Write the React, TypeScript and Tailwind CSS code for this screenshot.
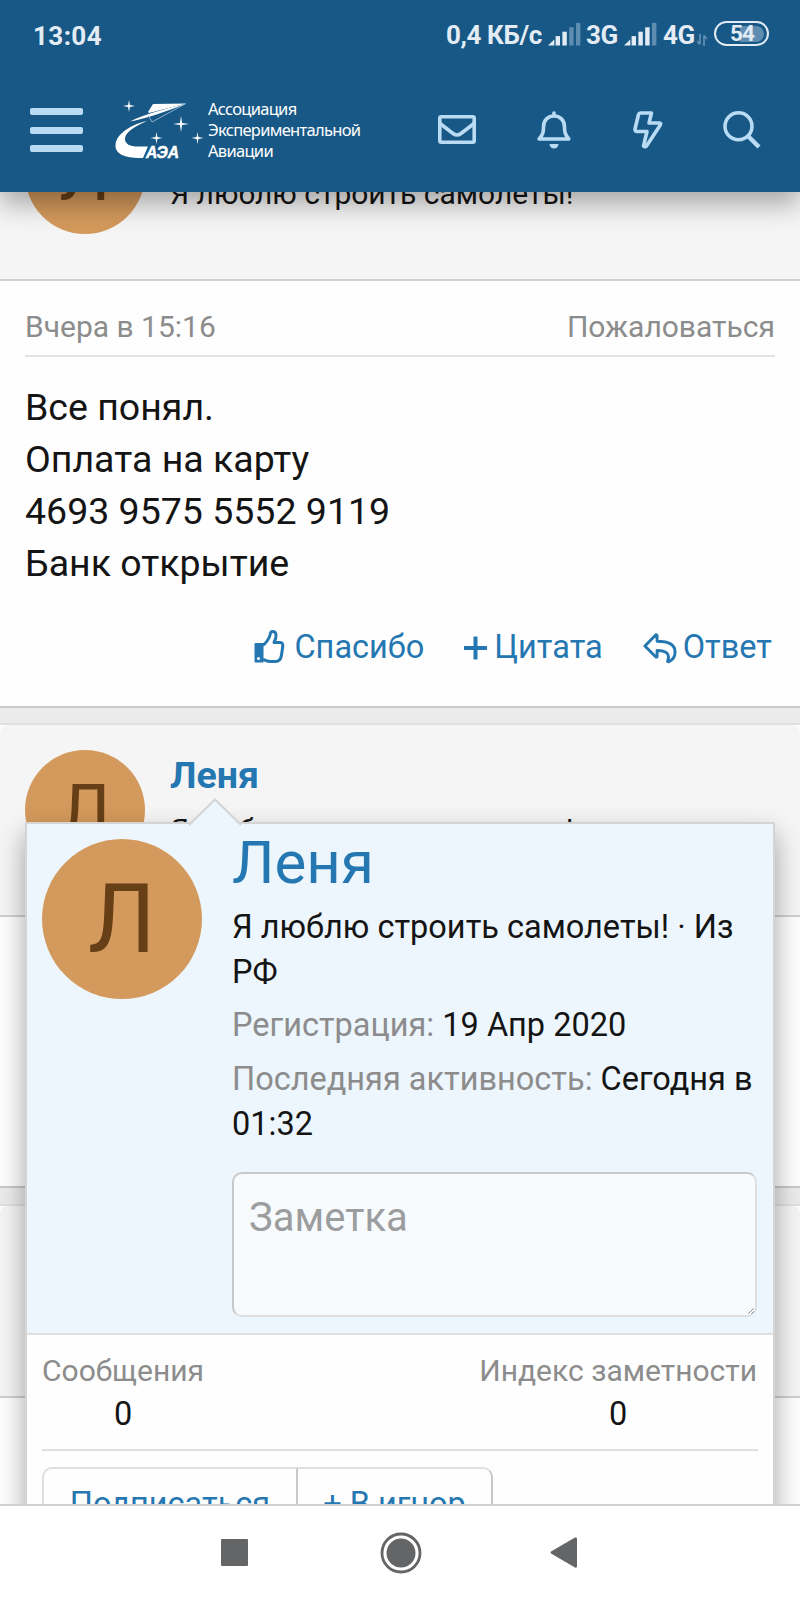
import * as React from 'react';

interface AvatarProps {
    big?: boolean;
}

const Avatar = ({ big }: AvatarProps) => (
    <div
        className={
            'flex shrink-0 items-center justify-center rounded-full bg-[#d4995c] text-[#663f16] ' +
            (big ? 'h-[160px] w-[160px] text-[96px] leading-[96px]' : 'h-[120px] w-[120px] pt-[3px] text-[72px] leading-[72px]')
        }
    >
        Л
    </div>
);

const Signal = ({ level }: { level: number }) => (
    <svg width="34" height="24" viewBox="0 0 34 24">
        {[0, 1, 2, 3, 4].map(i => (
            i === 0
                ? <path key={i} d="M0 23.5L6.3 17.5V23.5Z" fill="#e3ecf4" />
                : <rect
                    key={i}
                    x={i * 6.8 + 0.8}
                    y={18.5 - i * 4.4}
                    width="4.4"
                    height={5 + i * 4.4}
                    fill={i < level ? '#e3ecf4' : '#5f8db1'}
                />
        ))}
    </svg>
);

const StatusBar = () => (
    <div className="flex h-[72px] items-start justify-between pl-[33px] pr-[31px] text-[26px] font-bold leading-[30px] text-[#e3ecf4]">
        <div className="pt-[21px] tracking-[0.4px]">13:04</div>
        <div className="flex pt-[20px]">
            <div className="w-[102px] tracking-[-0.4px]">0,4 КБ/с</div>
            <div className="w-[38px] pt-[2px]"><Signal level={3} /></div>
            <div className="w-[38px] tracking-[-0.5px]">3G</div>
            <div className="w-[39px] pt-[2px]"><Signal level={4} /></div>
            <div className="w-[34px] tracking-[-0.5px]">4G</div>
            <svg className="mr-[7px] mt-[14px]" width="10" height="12" viewBox="0 0 10 12" fill="none" stroke="#5f8db1" strokeWidth="1.8">
                <path d="M3 0V10M0 7L3 10.5M7 12V1.5M10 5L7 1.5" />
            </svg>
            <div className="mt-px flex h-[25px] w-[55px] items-center justify-end rounded-full border-2 border-[#e3ecf4] pr-[3px]">
                <div className="flex h-[16px] w-[24px] items-center rounded-r-full bg-[#5f8db1]">
                    <span className="-ml-[10px] text-[22.5px] leading-none tracking-[-1px]">54</span>
                </div>
            </div>
        </div>
    </div>
);

const Logo = () => (
    <svg width="90" height="62" viewBox="0 0 90 62" fill="#fff">
        <path d="M32 21C14 25 1 35 0.5 45C0 54 10 58 25 58H28L33 46.500H23C15 46.500 10 44 10 39C10 33 18 27 32 21Z" />
        <path d="M38 4L71 3.500L34 13L33 12Z" />
        <path d="M71 3.500C50 9 30 14 15 21.500C28 19 48 13 71 3.500Z" />
        <path d="M33 15L37 22L71 3.500" fill="none" stroke="#a9c5da" strokeWidth="0.8" />
        <path d="M14 0L14.900 5.100L20 6L14.900 6.900L14 12L13.100 6.900L8 6L13.100 5.100Z" />
        <path d="M66 16L67.100 22.900L74 24L67.100 25.100L66 32L64.900 25.100L58 24L64.900 22.900Z" />
        <path d="M41.500 32L42.400 37.100L47.500 38L42.400 38.900L41.500 44L40.600 38.900L35.500 38L40.600 37.100Z" />
        <path d="M82.500 32L83.400 37.100L88.500 38L83.400 38.900L82.500 44L81.600 38.900L76.500 38L81.600 37.100Z" />
        <text x="31" y="58" fontFamily="Liberation Sans" fontSize="16.500" fontWeight="bold" fontStyle="italic" stroke="#fff" strokeWidth="0.5" textLength="33" lengthAdjust="spacingAndGlyphs">АЭА</text>
    </svg>
);

const NavBar = () => (
    <div className="flex h-[120px] pl-[30px] pr-[39px]">
        <div className="flex w-[53px] flex-col gap-[11.5px] pt-[36px]">
            <div className="h-[7px] rounded-[2px] bg-[#b9dbf4]" />
            <div className="h-[7px] rounded-[2px] bg-[#b9dbf4]" />
            <div className="h-[7px] rounded-[2px] bg-[#b9dbf4]" />
        </div>
        <div className="ml-[32px] mt-[28px]"><Logo /></div>
        <div className="ml-[3px] mt-[26px] w-[230px] font-['Noto_Sans'] text-[16.5px] leading-[21px] tracking-[-0.7px] text-white">
            Ассоциация<br />Экспериментальной<br />Авиации
        </div>
        <div className="mt-[38px] flex flex-1 items-start justify-between">
            <svg width="38" height="40" viewBox="0 0 38 40" fill="none" stroke="#b9dbf4" strokeWidth="3.600" strokeLinejoin="round">
                <rect x="1.800" y="6.800" width="34.400" height="25.400" rx="1.500" />
                <path d="M2 13.500L15 23.500Q19 26.500 23 23.500L36 13.500" />
            </svg>
            <svg className="-ml-[1px]" width="34" height="40" viewBox="0 0 34 40" fill="none" stroke="#b9dbf4" strokeWidth="3.600" strokeLinejoin="round" strokeLinecap="round">
                <path d="M17 3V6M2.200 29H31.800C28 24.500 27.500 22 27.500 17C27.500 10 23 6 17 6C11 6 6.500 10 6.500 17C6.500 22 6 24.500 2.200 29Z" />
                <path d="M12.500 34H21.500C21 40 13 40 12.500 34Z" fill="#b9dbf4" stroke="none" />
            </svg>
            <svg className="-mr-[2px]" width="30" height="40" viewBox="0 0 30 40" fill="none" stroke="#b9dbf4" strokeWidth="3.600" strokeLinejoin="round">
                <path d="M7.500 3H18.500L16 13H26.500Q28.300 13 27.300 15L13.500 36Q12 37.500 10.500 36L14 21.500H4Q1.800 21.500 2 19L5.500 4.500Q6 3 7.500 3Z" />
            </svg>
            <svg width="38" height="40" viewBox="0 0 38 40" fill="none" stroke="#b9dbf4" strokeWidth="3.600">
                <circle cx="15.500" cy="16.300" r="13.500" />
                <path d="M25 26L36 37" strokeWidth="4.500" />
            </svg>
        </div>
    </div>
);

interface PostHeaderProps {
    name?: string;
    title?: string;
}

const PostHeader = ({ name, title }: PostHeaderProps) => (
    <div className="flex h-[192px] gap-[25px] rounded-t-[8px] border-b-2 border-[#d0d0d0] bg-[#f5f5f5] px-[25px] pt-[25px]">
        {title && <Avatar />}
        <div>
            <div className="-mt-px h-[52px] text-[37.5px] font-bold leading-[52px] text-[#2577b1]">{name}</div>
            <div className="mt-[8px] text-[30px] leading-[42px]">{title}</div>
        </div>
    </div>
);

const PostActions = () => (
    <div className="flex h-[46px] justify-end pr-[3px] text-[32.5px] leading-[46px] text-[#2577b1]">
        <div className="flex">
            <svg className="mr-[9px] mt-[5px]" width="31" height="35" viewBox="0 0 30 35" fill="none" stroke="#2577b1" strokeWidth="3" strokeLinejoin="round">
                <path d="M1 14H9V33.500H1Q0 33.500 0 32.500V15Q0 14 1 14Z" fill="#2577b1" stroke="none" />
                <circle cx="4" cy="29.500" r="1.500" fill="#fff" stroke="none" />
                <path d="M8.500 16C11 15 15 9 15.500 6C15.800 3.500 16.500 2.500 18 2.500C23 2.500 22 9 19.500 13.500H25.500Q28.500 13.500 28.300 17L27 26Q26 32.500 21 32.500H16C12 32.500 11 31 8.500 30.500" />
            </svg>
            Спасибо
        </div>
        <div className="ml-[40px] flex">
            <svg className="mr-[7px] mt-[12px]" width="23" height="24" viewBox="0 0 23 24" stroke="#2577b1" strokeWidth="4">
                <path d="M0 12H23M11.500 0.500V23.500" />
            </svg>
            Цитата
        </div>
        <div className="ml-[40px] flex">
            <svg className="mr-[6px] mt-[8px]" width="34" height="32" viewBox="0 0 35 32" fill="none" stroke="#2577b1" strokeWidth="3" strokeLinejoin="round">
                <path d="M2 14L13 2.500Q14.500 2 14.500 3.500V9C25 9 33 12 33 20C33 25 30 28.500 26.500 30.200Q25 30.500 25.500 29C28 22 24 18.500 14.500 18.500V24.500Q14.500 26 13 25Z" />
            </svg>
            Ответ
        </div>
    </div>
);

const MemberTooltip = () => (
    <div className="absolute left-[25px] top-[630px] h-[900px] w-[750px] border-2 border-[#d4d4d4] bg-[#fefefe] shadow-[0_12px_25px_rgba(0,0,0,0.35)]">
        <svg className="absolute -top-[26px] left-[161px]" width="54" height="28" viewBox="0 0 54 28">
            <path d="M1 27L27 1.500L53 27V28H1Z" fill="#edf6fd" />
            <path d="M1 27L27 1.500L53 27" fill="none" stroke="#d4d4d4" strokeWidth="2" />
        </svg>
        <div className="flex h-[511px] gap-[30px] border-b-2 border-[#dfdfdf] bg-[#edf6fd] p-[15px]">
            <Avatar big />
            <div className="flex-1 text-[32.5px] leading-[45px]">
                <div className="-mt-[6px] text-[60px] leading-[60px] text-[#2577b1]">Леня</div>
                <div className="mt-[12px]">Я люблю строить самолеты! · Из<br />РФ</div>
                <div className="mt-[8px]"><span className="text-[#8c8c8c]">Регистрация:</span> 19 Апр 2020</div>
                <div className="mt-[9px]"><span className="text-[#8c8c8c]">Последняя активность:</span> Сегодня в<br />01:32</div>
                <div className="relative mt-[25px] h-[145px] w-[525px] rounded-[10px] border-2 border-l-[#c8c8c8] border-t-[#c8c8c8] border-b-[#dfdfdf] border-r-[#dfdfdf] bg-[#f8fbfe] pl-[15px] pt-[16px] text-[40px] leading-[56px] text-[#9c9d9e]">
                    Заметка
                    <svg className="absolute bottom-[1px] right-[1px]" width="6" height="6" viewBox="0 0 6 6" stroke="#666" strokeWidth="0.8">
                        <path d="M0.500 5.500L5.500 0.500M3.500 5.500L5.500 3.500" />
                    </svg>
                </div>
            </div>
        </div>
        <div className="mx-[15px] flex justify-between border-b-2 border-[#dfdfdf] pr-px pb-[12px] pt-[15px] text-center">
            <div>
                <div className="text-[30px] leading-[42px] text-[#8c8c8c]">Сообщения</div>
                <div className="-mt-px text-[32.5px] leading-[46px]">0</div>
            </div>
            <div>
                <div className="text-[30px] leading-[42px] text-[#8c8c8c]">Индекс заметности</div>
                <div className="-mt-px text-[32.5px] leading-[46px]">0</div>
            </div>
        </div>
        <div className="ml-[15px] mt-[16px] flex text-[32.5px] leading-[46px] text-[#2577b1]">
            <div className="h-[80px] w-[256px] rounded-l-[10px] border-2 border-[#dfdfdf] border-r-[#c8c8c8] pt-[12px] text-center">Подписаться</div>
            <div className="h-[80px] w-[195px] rounded-r-[10px] border-2 border-l-0 border-[#dfdfdf] border-r-[#c8c8c8] pt-[12px] text-center">+ В игнор</div>
        </div>
    </div>
);

const SystemNav = () => (
    <div className="relative z-10 flex h-[96px] items-center justify-center gap-[132px] border-t-2 border-[#d0d0d0] bg-white pb-px pr-[3px]">
        <div className="h-[27px] w-[27px] rounded-[1px] bg-[#646566]" />
        <svg width="42" height="42" viewBox="0 0 42 42">
            <circle cx="21" cy="21" r="19" fill="none" stroke="#646566" strokeWidth="2.800" />
            <circle cx="21" cy="21" r="14.500" fill="#646566" />
        </svg>
        <svg className="-ml-[4px]" width="27" height="31" viewBox="0 0 27 31">
            <path d="M1 14.500L25 0.500Q27 0 27 1.500V29.500Q27 31 25 30.500L1 16.500Q0 15.500 1 14.500Z" fill="#646566" />
        </svg>
    </div>
);

class App extends React.Component {
    public render() {
        return <div className="flex h-[1600px] w-[800px] flex-col overflow-hidden bg-white font-['Roboto',sans-serif] text-[#141414]">
            <div className="relative z-10 h-[192px] shrink-0 bg-[#185886] shadow-[0_12px_25px_rgba(0,0,0,0.32)]">
                <StatusBar />
                <NavBar />
            </div>
            <div className="relative h-[1312px] shrink-0 overflow-hidden bg-[#ebebeb]">
                <div className="-mt-[105px] h-[621px] border-y-2 border-t-[#dfdfdf] border-b-[#c8c8c8] bg-[#fefefe]">
                    <PostHeader title="Я люблю строить самолеты!" />
                    <div className="px-[25px] pt-[25px]">
                        <div className="flex justify-between border-b-2 border-[#e3e3e3] pb-[7px] text-[30px] leading-[42px] text-[#8c8c8c]">
                            <div>Вчера в 15:16</div>
                            <div>Пожаловаться</div>
                        </div>
                        <div className="mb-[35px] mt-[24px] text-[37.5px] leading-[52px]">
                            Все понял.<br />
                            Оплата на карту<br />
                            4693 9575 5552 9119<br />
                            Банк открытие
                        </div>
                        <PostActions />
                    </div>
                </div>
                <div className="mt-[15px] h-[465px] border-y-2 border-t-[#dfdfdf] border-b-[#c8c8c8] bg-[#fefefe]">
                    <PostHeader name="Леня" title="Я люблю строить самолеты!" />
                </div>
                <div className="mt-[16px] h-[400px] border-t-2 border-[#dfdfdf] bg-[#fefefe]">
                    <PostHeader />
                </div>
                <MemberTooltip />
            </div>
            <SystemNav />
        </div>
    }
}

export default App;
